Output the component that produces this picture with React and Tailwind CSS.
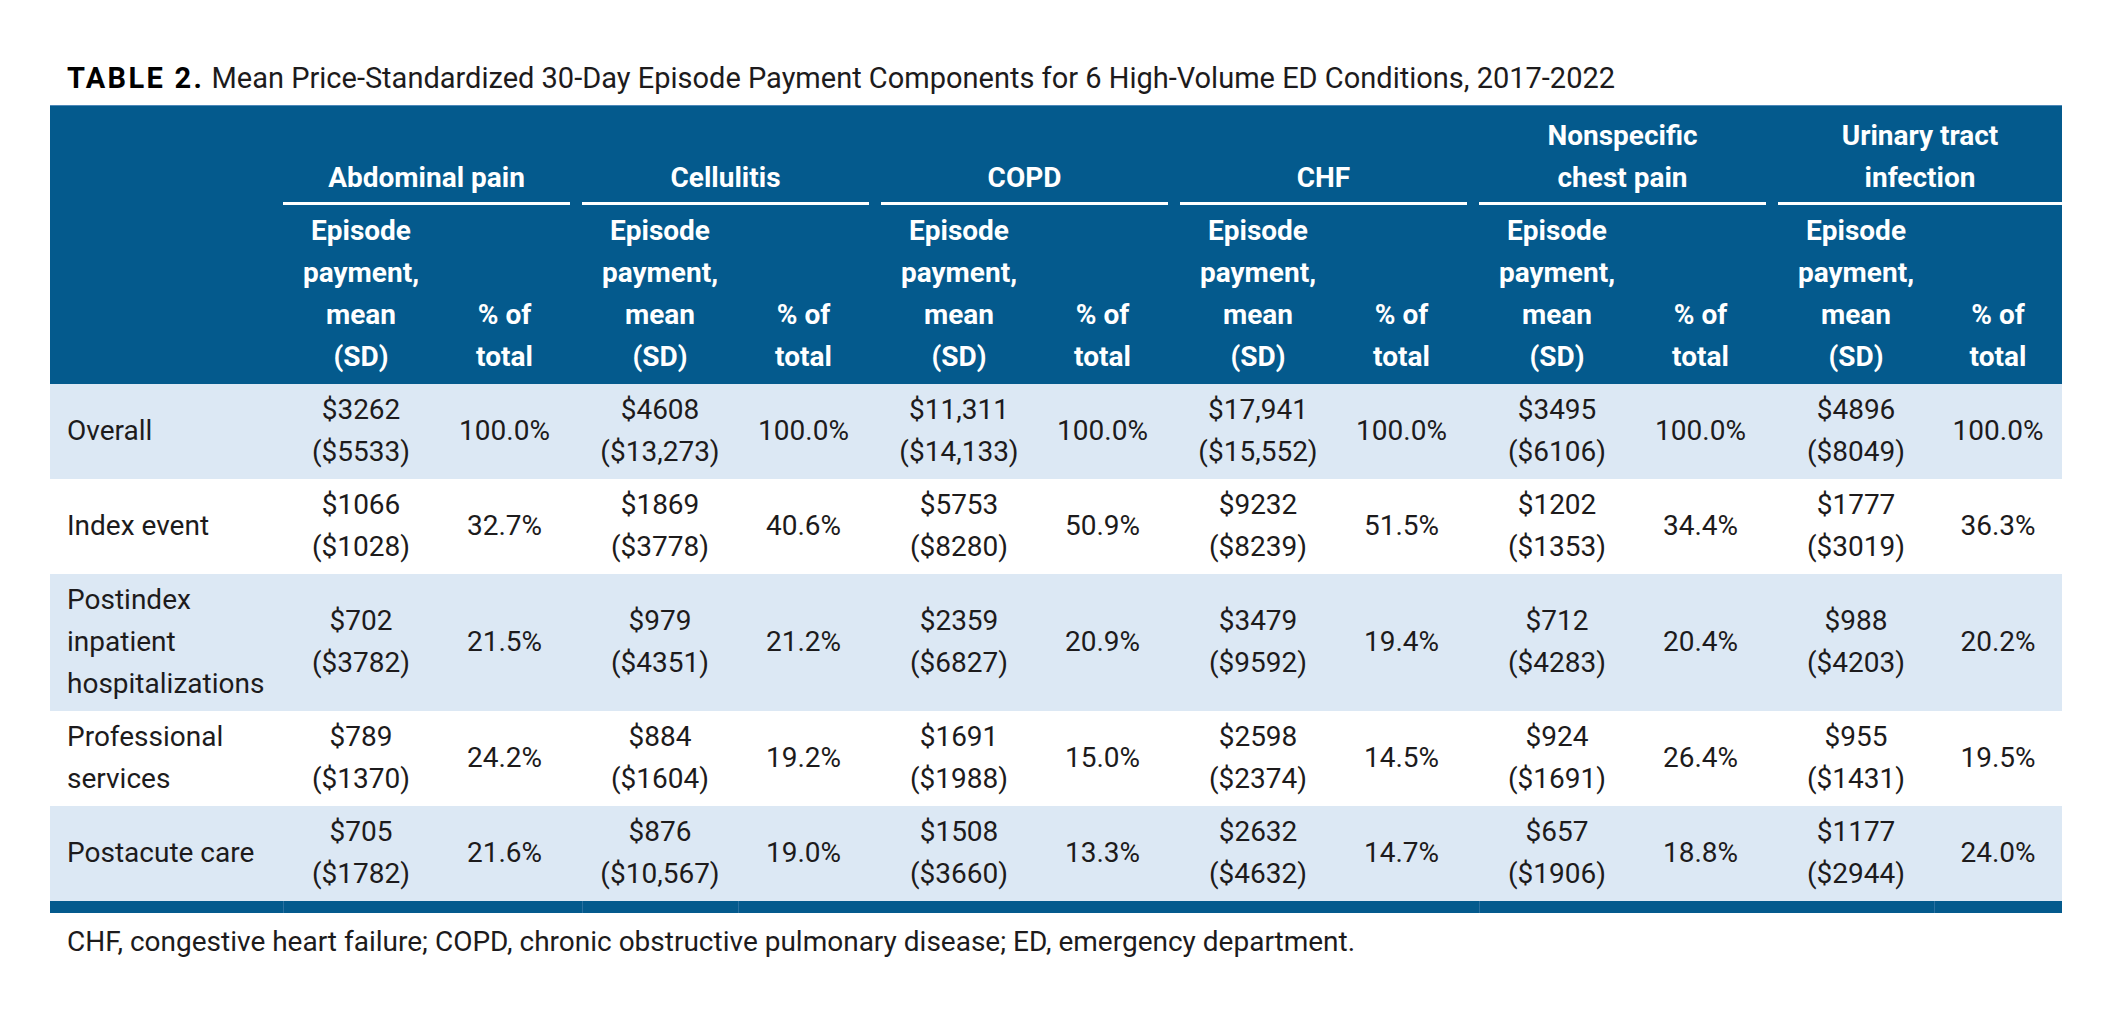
import React from "react";

const groups = [
  { name: ["Abdominal pain"] },
  { name: ["Cellulitis"] },
  { name: ["COPD"] },
  { name: ["CHF"] },
  { name: ["Nonspecific", "chest pain"] },
  { name: ["Urinary tract", "infection"] },
];

const rows = [
  {
    label: ["Overall"],
    shade: true,
    cells: [
      ["$3262", "($5533)", "100.0%"],
      ["$4608", "($13,273)", "100.0%"],
      ["$11,311", "($14,133)", "100.0%"],
      ["$17,941", "($15,552)", "100.0%"],
      ["$3495", "($6106)", "100.0%"],
      ["$4896", "($8049)", "100.0%"],
    ],
  },
  {
    label: ["Index event"],
    shade: false,
    cells: [
      ["$1066", "($1028)", "32.7%"],
      ["$1869", "($3778)", "40.6%"],
      ["$5753", "($8280)", "50.9%"],
      ["$9232", "($8239)", "51.5%"],
      ["$1202", "($1353)", "34.4%"],
      ["$1777", "($3019)", "36.3%"],
    ],
  },
  {
    label: ["Postindex", "inpatient", "hospitalizations"],
    shade: true,
    cells: [
      ["$702", "($3782)", "21.5%"],
      ["$979", "($4351)", "21.2%"],
      ["$2359", "($6827)", "20.9%"],
      ["$3479", "($9592)", "19.4%"],
      ["$712", "($4283)", "20.4%"],
      ["$988", "($4203)", "20.2%"],
    ],
  },
  {
    label: ["Professional", "services"],
    shade: false,
    cells: [
      ["$789", "($1370)", "24.2%"],
      ["$884", "($1604)", "19.2%"],
      ["$1691", "($1988)", "15.0%"],
      ["$2598", "($2374)", "14.5%"],
      ["$924", "($1691)", "26.4%"],
      ["$955", "($1431)", "19.5%"],
    ],
  },
  {
    label: ["Postacute care"],
    shade: true,
    cells: [
      ["$705", "($1782)", "21.6%"],
      ["$876", "($10,567)", "19.0%"],
      ["$1508", "($3660)", "13.3%"],
      ["$2632", "($4632)", "14.7%"],
      ["$657", "($1906)", "18.8%"],
      ["$1177", "($2944)", "24.0%"],
    ],
  },
];

function Lines({ items }) {
  return items.map((t, i) => (
    <React.Fragment key={i}>
      {i > 0 && <br />}
      {t}
    </React.Fragment>
  ));
}

export default function App() {
  return (
    <div className="w-[2113px] h-[1020px] bg-white font-[Roboto,sans-serif] text-[#1d1b1c]">
      <div className="pt-[61px] pl-[67px] text-[29px] leading-[35px] whitespace-nowrap">
        <span className="font-bold tracking-[0.08em] text-black">TABLE 2.</span>
        <span> Mean Price-Standardized 30-Day Episode Payment Components for 6 High-Volume ED Conditions, 2017-2022</span>
      </div>

      <table className="ml-[50px] mt-[9px] w-[2012px] table-fixed border-collapse text-[28px] leading-[42px]">
        <colgroup>
          <col className="w-[233px]" />
          {groups.map((g, i) => (
            <React.Fragment key={i}>
              <col className="w-[156px]" />
              <col className={i === 5 ? "w-[128px]" : "w-[143px]"} />
            </React.Fragment>
          ))}
        </colgroup>
        <thead className="bg-[#045a8d] text-white font-bold">
          <tr className="border-t border-[#4d88b8]">
            <th rowSpan={2} className="p-0"></th>
            {groups.map((g, i) => (
              <th key={i} colSpan={2} className="p-0 pt-[9px] align-bottom font-bold">
                <div className={i === 5 ? "" : "mr-[12px]"}>
                  <div className="text-center">
                    <Lines items={g.name} />
                  </div>
                  <div className="mt-[3px] h-[3px] bg-white"></div>
                </div>
              </th>
            ))}
          </tr>
          <tr>
            {groups.map((g, i) => (
              <React.Fragment key={i}>
                <th className="p-0 pt-[5px] pb-[6px] align-bottom text-center font-bold">
                  Episode
                  <br />
                  payment,
                  <br />
                  mean
                  <br />
                  (SD)
                </th>
                <th
                  className={
                    "p-0 pt-[5px] pb-[6px] align-bottom text-center font-bold " +
                    (i === 5 ? "" : "pr-[12px]")
                  }
                >
                  % of
                  <br />
                  total
                </th>
              </React.Fragment>
            ))}
          </tr>
        </thead>
        <tbody>
          {rows.map((r, ri) => (
            <tr key={ri} className={r.shade ? "bg-[#dce8f4]" : "bg-white"}>
              <td className="p-0 pl-[17px] pt-[5px] pb-[6px] align-middle">
                <Lines items={r.label} />
              </td>
              {r.cells.map((c, ci) => (
                <React.Fragment key={ci}>
                  <td className="p-0 pt-[5px] pb-[6px] text-center align-middle">
                    {c[0]}
                    <br />
                    {c[1]}
                  </td>
                  <td
                    className={
                      "p-0 pt-[5px] pb-[6px] text-center align-middle " +
                      (ci === 5 ? "" : "pr-[12px]")
                    }
                  >
                    {c[2]}
                  </td>
                </React.Fragment>
              ))}
            </tr>
          ))}
          <tr className="bg-[#045a8d] h-[12px]">
            <td className="p-0 h-[12px]"></td>
            <td className="p-0 border-l border-[#2a70a0]"></td>
            <td className="p-0"></td>
            <td className="p-0 border-l border-[#2a70a0]"></td>
            <td className="p-0 border-l border-[#2a70a0]"></td>
            <td className="p-0"></td>
            <td className="p-0"></td>
            <td className="p-0"></td>
            <td className="p-0"></td>
            <td className="p-0 border-l border-[#2a70a0]"></td>
            <td className="p-0"></td>
            <td className="p-0"></td>
            <td className="p-0 border-l border-[#2a70a0]"></td>
          </tr>
        </tbody>
      </table>

      <div className="mt-[12px] pl-[67px] text-[28px] leading-[33px] whitespace-nowrap">
        CHF, congestive heart failure; COPD, chronic obstructive pulmonary disease; ED, emergency department.
      </div>
    </div>
  );
}
